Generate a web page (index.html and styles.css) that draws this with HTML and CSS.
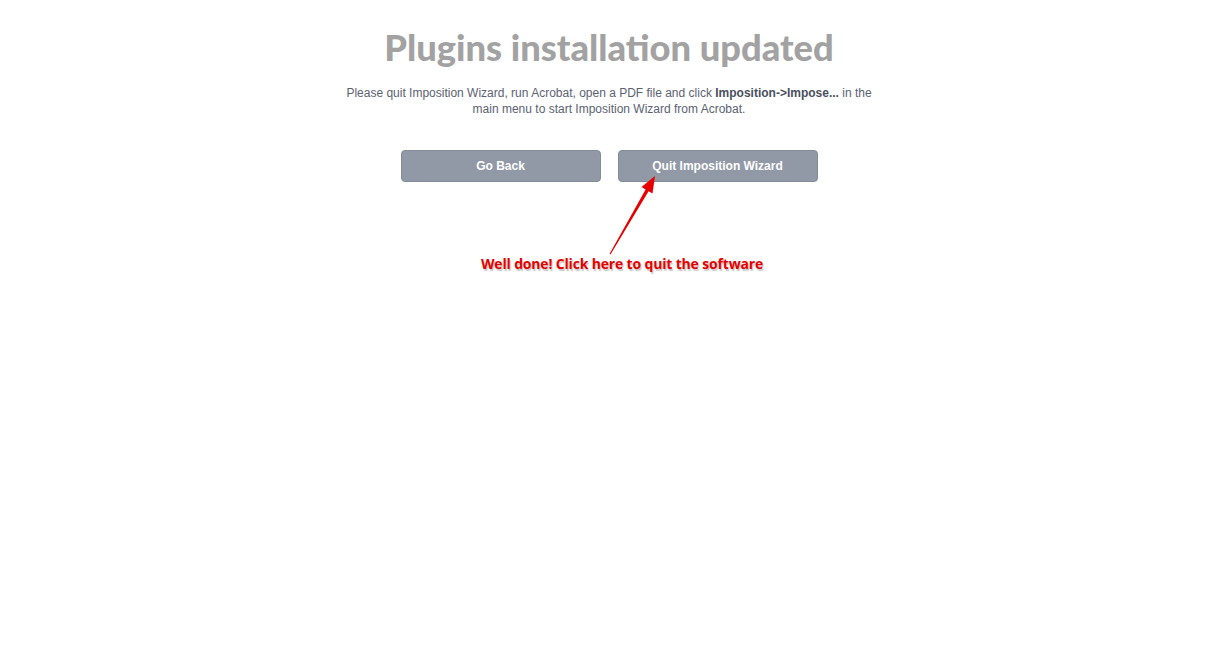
FILE: index.html
```html
<!DOCTYPE html>
<html lang="en">
<head>
    <meta charset="UTF-8">
    <meta name="viewport" content="width=device-width, initial-scale=1.0">
    <title>Imposition Wizard</title>
    <link rel="stylesheet" href="styles.css">
</head>
<body>
<div id="page">
    <h1 class="title">Plugins installation updated</h1>

    <p class="note">
        Please quit Imposition Wizard, run Acrobat, open a PDF file and click <b>Imposition-&gt;Impose...</b> in the
        main menu to start Imposition Wizard from Acrobat.
    </p>

    <div class="actions">
        <button class="btn" id="back">Go Back</button>
        <button class="btn" id="quit">Quit Imposition Wizard</button>
    </div>

    <!-- hint pointing at the quit button -->
    <svg class="hint-arrow" width="1218" height="300" viewBox="0 0 1218 300">
        <polygon fill="#e60000" points="655,176 652.5,193.5 648.6,191.2 610.5,254.5 609.5,254 645.6,189.4 641.5,187"/>
    </svg>
    <div class="hint">Well done! Click here to quit the software</div>
</div>
</body>
</html>
```

FILE: styles.css
```css
body {
    margin: 0;
    background: #fff;
    font-family: "Liberation Sans", Arial, sans-serif;
}

#page {
    position: relative;
    display: flex;
    flex-direction: column;
    align-items: center;
    padding-top: 25px;
    height: 646px;
}

.title {
    margin: 0;
    font-family: Lato, sans-serif;
    font-weight: 900;
    font-size: 36.3px;
    line-height: 44px;
    color: #a2a2a2;
}

.note {
    margin: 16px 0 0;
    width: 540px;
    text-align: center;
    font-size: 12px;
    line-height: 16px;
    color: #5b6272;
}

.note b {
    color: #4a505e;
}

.actions {
    display: flex;
    gap: 17px;
    margin-top: 33px;
}

.btn {
    width: 200px;
    height: 32px;
    border: 1px solid #848c9a;
    border-radius: 4px;
    background: #9199a7;
    color: #fff;
    font-family: "Liberation Sans", Arial, sans-serif;
    font-weight: bold;
    font-size: 12px;
}

.hint-arrow {
    position: absolute;
    left: 0;
    top: 0;
}

.hint {
    position: absolute;
    left: 481px;
    top: 254px;
    font-family: "Open Sans", sans-serif;
    font-weight: bold;
    font-size: 14px;
    letter-spacing: -0.17px;
    color: #e60000;
    text-shadow: 1px 2px 1px #c8c8c8;
}
```
